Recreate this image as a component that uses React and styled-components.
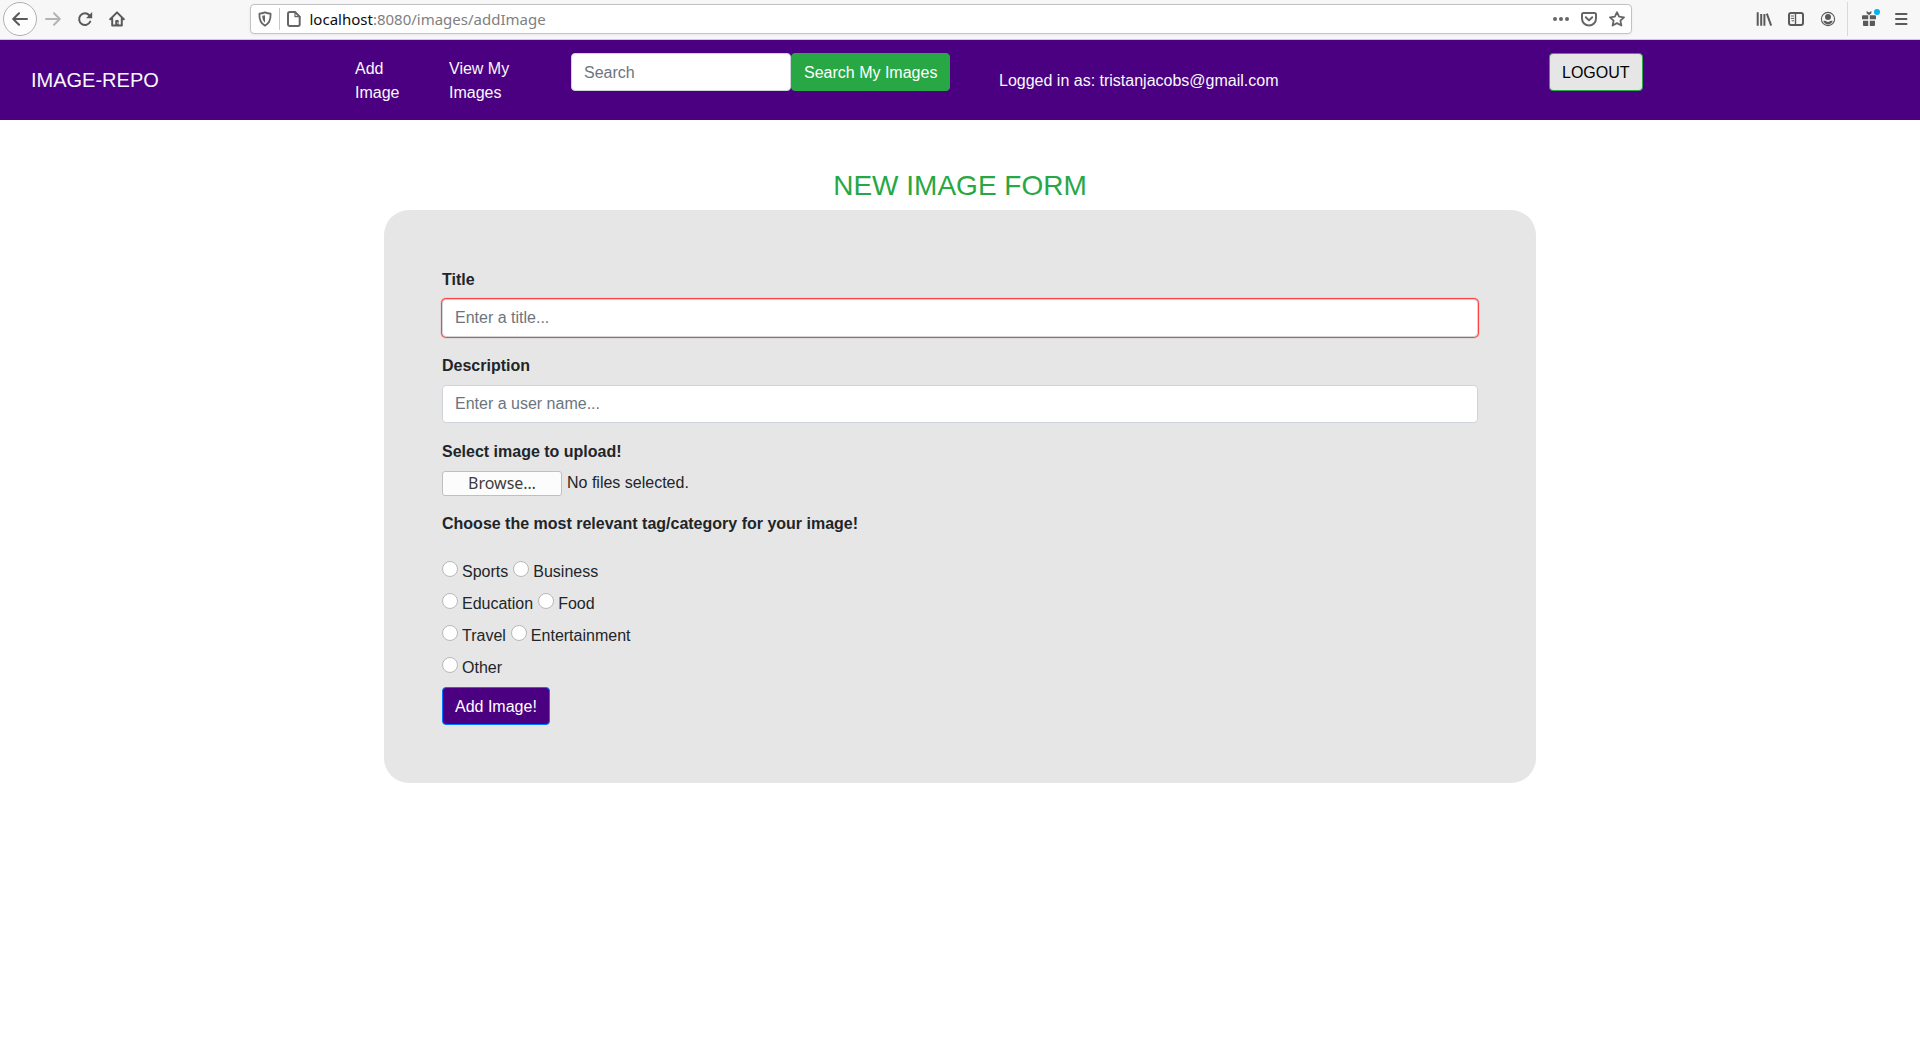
import React from "react";
import styled, { createGlobalStyle, css } from "styled-components";

const purple = "#4b0082";
const green = "#28a745";
const grey = "#e6e6e6";
const sans = `"Liberation Sans", Arial, sans-serif`;
const uiFont = `"Noto Sans", "Open Sans", sans-serif`;

const GlobalStyle = createGlobalStyle`
  *, *::before, *::after { box-sizing: border-box; }
  body {
    margin: 0;
    background: #fff;
    color: #212529;
    font: 400 16px/24px ${sans};
  }
  button, input { font: inherit; }
`;

/* ---------- Browser toolbar ---------- */

const Toolbar = styled.div`
  display: flex;
  align-items: center;
  height: 40px;
  padding: 0 3px 2px;
  background: #f7f7f7;
  border-bottom: 1px solid #ccc;
`;

const ToolGroup = styled.div`
  display: flex;
  align-items: center;
`;

const ToolButton = styled.button`
  display: grid;
  place-items: center;
  width: 32px;
  height: 32px;
  padding: 0;
  border: 0;
  background: none;
  color: ${(p) => (p.$dim ? "#b4b4b4" : "#5a5a5a")};
  ${(p) =>
    p.$round &&
    css`
      width: 34px;
      height: 34px;
      border: 1px solid #b1b1b1;
      border-radius: 50%;
      background: #fdfdfd;
    `}
`;

const Spacer = styled.div`
  flex: 117 1 0;
`;

const AddressBar = styled.div`
  flex: 1380 1 0;
  display: flex;
  align-items: center;
  height: 30px;
  padding: 0 0 0 6px;
  border: 1px solid #c2c2c2;
  border-radius: 4px;
  background: #fff;
  box-shadow: 0 1px 3px rgba(0, 0, 0, 0.06);
`;

const AddressIcon = styled.button`
  display: grid;
  place-items: center;
  flex: none;
  width: ${(p) => (p.$wide ? 28 : 16)}px;
  height: 24px;
  padding: 0;
  border: 0;
  background: none;
  color: #666;
`;

const Divider = styled.span`
  flex: none;
  width: 1px;
  height: ${(p) => (p.$tall ? 34 : 22)}px;
  margin: ${(p) => (p.$tall ? "0 5px 0 3px" : "0 6px")};
  background: ${(p) => (p.$tall ? "#d9d9d9" : "#c8c8c8")};
`;

const Address = styled.div`
  flex: 1;
  margin-left: 8px;
  color: #808080;
  font: 15px/22px ${uiFont};
  white-space: nowrap;
  overflow: hidden;
`;

const Host = styled.span`
  color: #0c0c0d;
`;

const Svg = ({ children, ...rest }) => (
  <svg
    width="16"
    height="16"
    viewBox="0 0 16 16"
    fill="none"
    stroke="currentColor"
    strokeWidth="2"
    strokeLinecap="round"
    strokeLinejoin="round"
    aria-hidden="true"
    {...rest}
  >
    {children}
  </svg>
);

const BackIcon = () => (
  <Svg><path d="M15 8H1.5M7 2.2L1.2 8L7 13.8" /></Svg>
);
const ForwardIcon = () => (
  <Svg><path d="M1 8h13.5M9 2.2L14.8 8L9 13.8" /></Svg>
);
const ReloadIcon = () => (
  <Svg>
    <path d="M13.2 10.6A5.8 5.8 0 1 1 12.2 4.2" />
    <path d="M15.2 1v6.2H9z" fill="currentColor" stroke="none" />
  </Svg>
);
const HomeIcon = () => (
  <Svg>
    <path d="M1.2 8.2L8 1.4l6.8 6.8M3.2 7.5V14.6h9.6V7.5" />
    <path d="M6.2 15V10a1 1 0 0 1 1-1h1.6a1 1 0 0 1 1 1v5z" fill="currentColor" stroke="none" />
    <circle cx="8.9" cy="12" r=".7" fill="#f7f7f7" stroke="none" />
  </Svg>
);
const ShieldIcon = () => (
  <Svg strokeWidth="1.8">
    <path d="M8 1.4c2 .9 3.6 1.2 5.6 1.3c.2 5.6-1.2 9.6-5.6 12C3.6 12.3 2.2 8.3 2.400 2.700C4.400 2.600 6 2.300 8 1.400z" />
    <path d="M8 4.200v7.600c-2-1.700-2.800-4-2.800-7c1.100-.1 1.900-.3 2.800-.6z" fill="currentColor" stroke="none" />
  </Svg>
);
const PageIcon = () => (
  <Svg>
    <path d="M3.700 1H9l4.700 4.700v7.600A1.700 1.700 0 0 1 12 15H3.700A1.700 1.700 0 0 1 2 13.300V2.700A1.700 1.700 0 0 1 3.700 1z" />
    <path d="M9 1v4.700h4.700" strokeWidth="1.200" />
  </Svg>
);
const DotsIcon = () => (
  <Svg fill="currentColor" stroke="none">
    <circle cx="2" cy="8" r="2" />
    <circle cx="8" cy="8" r="2" />
    <circle cx="14" cy="8" r="2" />
  </Svg>
);
const PocketIcon = () => (
  <Svg>
    <path d="M2.500 2h11A1.500 1.500 0 0 1 15 3.500V7.500a7 7 0 0 1-14 0V3.500A1.500 1.500 0 0 1 2.500 2z" />
    <path d="M4.800 6.300L8 9.400l3.200-3.100" />
  </Svg>
);
const StarIcon = () => (
  <Svg strokeWidth="1.800">
    <path d="M8 1.200l2.100 4.500l4.900.6l-3.600 3.300l1 4.900L8 12.100l-4.400 2.400l1-4.900L1 6.300l4.900-.6z" />
  </Svg>
);
const LibraryIcon = () => (
  <Svg strokeLinecap="butt">
    <path d="M1.700 1.200v13.600M5.200 3v11.800M8.400 3v11.800M10.800 2.600l4.400 12" />
  </Svg>
);
const SidebarIcon = () => (
  <Svg>
    <rect x="1" y="2" width="14" height="12" rx="2" />
    <path d="M7.500 2v12" strokeWidth="1.400" />
    <path d="M3.200 5h2.400M3.200 7.400h2.400M4 9.800h1.600" strokeWidth="1" />
  </Svg>
);
const AccountIcon = () => (
  <Svg>
    <circle cx="8" cy="8" r="6.600" strokeWidth="1.100" />
    <circle cx="8" cy="6" r="3" fill="currentColor" stroke="none" />
    <path d="M3.300 10.200c1.300-.8 2.300-.6 3 .1c1 .8 2.400.8 3.400 0c.7-.7 1.700-.9 3-.1C11.800 12.200 10.100 13.400 8 13.400s-3.800-1.200-4.700-3.200z" fill="currentColor" stroke="none" />
  </Svg>
);
const GiftIcon = () => (
  <Svg width="24" height="20" viewBox="-4 -2 24 20" fill="currentColor" stroke="none">
    <path d="M2 4.200h5.200v4H1V5.200a1 1 0 0 1 1-1zM8.800 4.200H14a1 1 0 0 1 1 1v3H8.800zM2 9.800h5.200V15H3a1 1 0 0 1-1-1zM8.800 9.800H14V14a1 1 0 0 1-1 1H8.800z" />
    <path d="M5.600 0L8 1.400L10.400 0v2.200L8 4.200L5.600 2.200z" />
    <circle cx="16" cy="1" r="3" fill="#00b3f4" />
  </Svg>
);
const MenuIcon = () => (
  <Svg><path d="M3 3h10.500M3 8h10.500M3 13h10.500" /></Svg>
);

/* ---------- Page navigation ---------- */

const NavBar = styled.nav`
  display: grid;
  grid-template-columns: 324fr 94fr 122fr 428fr 550fr 339fr;
  min-height: 80px;
  padding: 13px 32px 0 31px;
  background: ${purple};
  color: #f8f9fa;
`;

const Brand = styled.a`
  padding-top: 12px;
  color: inherit;
  font-size: 20px;
  line-height: 30px;
  text-decoration: none;
`;

const NavLink = styled.a`
  padding: 4px 32px 0 0;
  color: inherit;
  text-decoration: none;
`;

const SearchForm = styled.form`
  display: flex;
  align-items: flex-start;
`;

const UserNote = styled.span`
  padding-top: 16px;
`;

const TextInput = styled.input`
  display: block;
  width: 100%;
  height: 38px;
  padding: 6px 12px;
  border: 1px solid #ced4da;
  border-radius: 4px;
  background: #fff;
  color: #495057;
  outline: 0;
  box-shadow: ${(p) => (p.$invalid ? "0 0 1px 1px #f33" : "none")};
  &::placeholder {
    color: #6c757d;
    opacity: 1;
  }
`;

const SearchInput = styled(TextInput)`
  flex: 0 1 220px;
  min-width: 0;
  padding: 7px 12px 5px;
`;

const variants = {
  search: css`
    background: ${green};
    border-color: ${green};
    color: #fff;
  `,
  logout: css`
    background: ${grey};
    border-color: ${green};
    color: #000;
  `,
  submit: css`
    background: ${purple};
    border-color: #007bff;
    color: #fff;
  `,
};

const Button = styled.button`
  flex: none;
  justify-self: start;
  height: 38px;
  padding: 7px 12px 5px;
  border: 1px solid;
  border-radius: 4px;
  white-space: nowrap;
  cursor: pointer;
  ${(p) => variants[p.$variant]}
`;

/* ---------- Form ---------- */

const Main = styled.main`
  padding-top: 49px;
`;

const Heading = styled.h1`
  margin: 0 0 7px;
  color: ${green};
  font-size: 28px;
  font-weight: 400;
  line-height: 34px;
  text-align: center;
`;

const Card = styled.form`
  width: 60%;
  margin: 0 auto;
  padding: 58px;
  border-radius: 25px;
  background: ${grey};
`;

const Field = styled.div`
  margin-bottom: 17px;
`;

const Label = styled.label`
  display: block;
  margin-bottom: 7px;
  font-weight: 700;
`;

const FilePicker = styled.div`
  position: relative;
  display: flex;
  align-items: center;
  gap: 5px;
  height: 24px;
`;

const FileInput = styled.input`
  position: absolute;
  inset: 0;
  width: 100%;
  opacity: 0;
  cursor: pointer;
`;

const BrowseFace = styled.span`
  width: 120px;
  height: 25px;
  border: 1px solid #bfbfbf;
  border-radius: 3px;
  background: #fcfcfc;
  color: #3c3c3c;
  font: 16px/23px ${uiFont};
  text-align: center;
`;

const TagGroup = styled.fieldset`
  display: grid;
  gap: 8px;
  margin: 0 0 7px;
  padding: 0;
  border: 0;
`;

const Legend = styled.legend`
  margin-bottom: 24px;
  padding: 0;
  font-weight: 700;
`;

const TagRow = styled.div`
  display: flex;
  gap: 5px;
`;

const Tag = styled.label`
  display: flex;
  gap: 4px;
`;

const Radio = styled.input`
  appearance: none;
  width: 16px;
  height: 16px;
  margin: 1px 0 0;
  border: 1px solid #b8b8b8;
  border-radius: 50%;
  background: #fff;
  &:checked {
    border: 5px solid ${purple};
  }
`;

const tagRows = [["Sports", "Business"], ["Education", "Food"], ["Travel", "Entertainment"], ["Other"]];

function BrowserToolbar() {
  return (
    <Toolbar>
      <ToolGroup>
        <ToolButton $round aria-label="Back"><BackIcon /></ToolButton>
        <ToolButton $dim aria-label="Forward"><ForwardIcon /></ToolButton>
        <ToolButton aria-label="Reload"><ReloadIcon /></ToolButton>
        <ToolButton aria-label="Home"><HomeIcon /></ToolButton>
      </ToolGroup>
      <Spacer />
      <AddressBar>
        <AddressIcon aria-label="Tracking protection"><ShieldIcon /></AddressIcon>
        <Divider />
        <AddressIcon aria-label="Site information"><PageIcon /></AddressIcon>
        <Address role="textbox" aria-label="Address" contentEditable suppressContentEditableWarning spellCheck={false}>
          <Host>localhost</Host>:8080/images/addImage
        </Address>
        <AddressIcon $wide aria-label="Page actions"><DotsIcon /></AddressIcon>
        <AddressIcon $wide aria-label="Save to Pocket"><PocketIcon /></AddressIcon>
        <AddressIcon $wide aria-label="Bookmark"><StarIcon /></AddressIcon>
      </AddressBar>
      <Spacer />
      <ToolGroup>
        <ToolButton aria-label="Library"><LibraryIcon /></ToolButton>
        <ToolButton aria-label="Sidebars"><SidebarIcon /></ToolButton>
        <ToolButton aria-label="Account"><AccountIcon /></ToolButton>
        <Divider $tall />
        <ToolButton aria-label="What's new"><GiftIcon /></ToolButton>
        <ToolButton aria-label="Menu"><MenuIcon /></ToolButton>
      </ToolGroup>
    </Toolbar>
  );
}

export default function App() {
  return (
    <>
      <GlobalStyle />
      <BrowserToolbar />
      <NavBar>
        <Brand href="#">IMAGE-REPO</Brand>
        <NavLink href="#">Add Image</NavLink>
        <NavLink href="#">View My Images</NavLink>
        <SearchForm onSubmit={(e) => e.preventDefault()}>
          <SearchInput type="search" placeholder="Search" aria-label="Search" />
          <Button $variant="search" type="submit">Search My Images</Button>
        </SearchForm>
        <UserNote>Logged in as: tristanjacobs@gmail.com</UserNote>
        <Button $variant="logout" type="button">LOGOUT</Button>
      </NavBar>
      <Main>
        <Heading>NEW IMAGE FORM</Heading>
        <Card noValidate onSubmit={(e) => e.preventDefault()}>
          <Field>
            <Label htmlFor="title">Title</Label>
            <TextInput $invalid id="title" type="text" placeholder="Enter a title..." required />
          </Field>
          <Field>
            <Label htmlFor="description">Description</Label>
            <TextInput id="description" type="text" placeholder="Enter a user name..." />
          </Field>
          <Field>
            <Label htmlFor="upload">Select image to upload!</Label>
            <FilePicker>
              <BrowseFace>Browse…</BrowseFace>
              <span>No files selected.</span>
              <FileInput id="upload" type="file" multiple />
            </FilePicker>
          </Field>
          <TagGroup>
            <Legend>Choose the most relevant tag/category for your image!</Legend>
            {tagRows.map((row) => (
              <TagRow key={row[0]}>
                {row.map((tag) => (
                  <Tag key={tag}>
                    <Radio type="radio" name="tag" value={tag} />
                    {tag}
                  </Tag>
                ))}
              </TagRow>
            ))}
          </TagGroup>
          <Button $variant="submit" type="submit">Add Image!</Button>
        </Card>
      </Main>
    </>
  );
}
